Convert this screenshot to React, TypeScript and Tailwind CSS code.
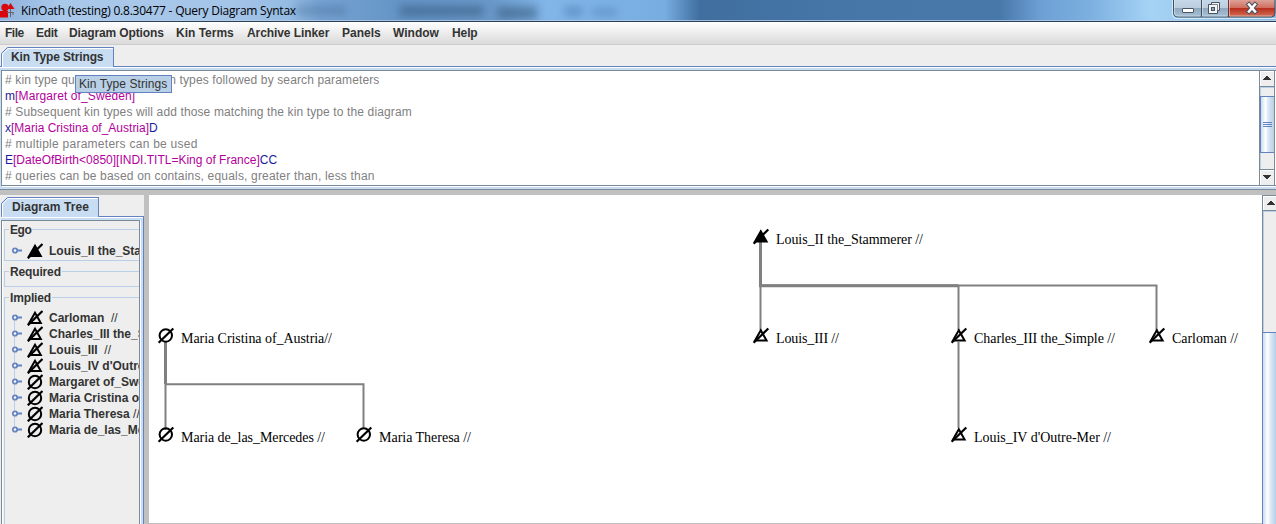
import React from "react";

type Kind = "circle" | "triangle" | "ego";

function Mark({ kind }: { kind: Kind }) {
  return (
    <g fill="none" stroke="#000" strokeWidth="2">
      {kind === "circle" ? (
        <circle cx="8" cy="8" r="6.2" />
      ) : (
        <path d="M8 2.8 L13.8 13 H2.2 Z" fill={kind === "ego" ? "#000" : "none"} />
      )}
      <path d="M.8 15.300 L15.500 1" strokeWidth="2.200" />
    </g>
  );
}

function Arrow({ down = false }: { down?: boolean }) {
  return (
    <svg width="9" height="5" className="block" shapeRendering="crispEdges">
      <path d={down ? "M0 0h8v1h-1v1h-1v1h-1v1h-2v-1h-1v-1h-1v-1h-1z" : "M0 4h8v-1h-1v-1h-1v-1h-1v-1h-2v1h-1v1h-1v1h-1z"} fill="#333" />
    </svg>
  );
}

const menus = [
  { label: "File", cls: "w-[31px] tracking-[-0.5px]" },
  { label: "Edit", cls: "w-[33px] tracking-[-0.3px]" },
  { label: "Diagram Options", cls: "w-[107px] tracking-[-0.13px]" },
  { label: "Kin Terms", cls: "w-[71px]" },
  { label: "Archive Linker", cls: "w-[95px] tracking-[-0.08px]" },
  { label: "Panels", cls: "w-[51px]" },
  { label: "Window", cls: "w-[59px]" },
  { label: "Help", cls: "w-[40px] tracking-[-0.1px]" },
];

function TitleBar() {
  return (
    <div className="relative flex h-[22px] shrink-0 justify-between overflow-hidden border-b border-[#2c4059] bg-[linear-gradient(90deg,#8fb2dc_0px,#a9c8ea_60px,#a5c5e8_230px,#94bbe2_290px,#76a3d3_320px,#6494c6_400px,#6a99c9_490px,#82b6e8_545px,#78ade1_665px,#3f6e9f_700px,#4776a9_860px,#4878aa_1000px,#6d9fd4_1040px,#7cb0e0_1090px,#a5d3f5_1150px,#8dbbe0_1276px)]">
      <div className="absolute left-[296px] top-[6px] h-[9px] w-[50px] bg-[#2f5079]/30 blur-[4px]" />
      <div className="absolute left-[400px] top-[6px] h-[10px] w-[84px] bg-[#1d3a5c]/40 blur-[4px]" />
      <div className="absolute left-[497px] top-[7px] h-[12px] w-[40px] bg-[#1d3a5c]/45 blur-[5px]" />
      <div className="absolute left-[565px] top-[7px] h-[9px] w-[17px] bg-[#2f5f95]/40 blur-[4px]" />
      <div className="absolute left-[592px] top-[8px] h-[8px] w-[25px] bg-[#2f5f95]/30 blur-[4px]" />
      <div className="absolute bottom-0 left-0 h-px w-full bg-[#b4cde6]/80" />
      <div className="relative flex items-start">
        <svg width="21" height="20" className="block">
          <circle cx="5" cy="7.500" r="3.700" fill="#d9060e" />
          <path d="M10.500 3l4 6H6.500z" fill="#d9060e" />
          <rect x="0" y="11" width="8" height="6.500" fill="#d9060e" />
          <path d="M10.500 9v8M7 12.500h6.500M13 12v3" stroke="#666" fill="none" />
        </svg>
        <span className="whitespace-nowrap font-['Open_Sans','Noto_Sans',sans-serif] text-[12px] leading-[22px] tracking-[-0.23px] text-black">KinOath (testing) 0.8.30477 - Query Diagram Syntax</span>
      </div>
      <svg width="104" height="21" className="relative block">
        <defs>
          <linearGradient id="glass" x1="0" y1="0" x2="0" y2="1"><stop offset="0" stopColor="#c5d8e9" /><stop offset=".48" stopColor="#bbcddd" /><stop offset=".5" stopColor="#91a9bf" /><stop offset="1" stopColor="#a7c2d8" /></linearGradient>
          <linearGradient id="close" x1="0" y1="0" x2="0" y2="1"><stop offset="0" stopColor="#dda298" /><stop offset=".48" stopColor="#cf6a5b" /><stop offset=".5" stopColor="#b82f1c" /><stop offset="1" stopColor="#d4735a" /></linearGradient>
        </defs>
        <path d="M.5 0v14q0 4.500 4.500 4.500H104" stroke="#d5e8f7" fill="none" />
        <path d="M2 0v13q0 4 4 4H29V0z" fill="url(#glass)" />
        <rect x="29" y="0" width="27" height="17" fill="url(#glass)" />
        <path d="M56 0h47v14q0 3-3 3H56z" fill="url(#close)" />
        <path d="M1.500 0v13q0 4.500 4.500 4.500H99q4 0 4-4V0M29.500 0v17" fill="none" stroke="#40505f" transform="translate(0 -.5)" />
        <path d="M56.500 0v17" stroke="#7a2f2a" />
        <path d="M2.500 0v13q0 3 3.500 3H28M30.500 0v16H55M57.500 0v16H100" fill="none" stroke="#e8f0f6" strokeOpacity=".5" />
        <rect x="10.500" y="8.500" width="11" height="4" rx=".5" fill="#fff" stroke="#4a5361" />
        <path d="M39.500 2.500h8v8h-2v3h-9v-9h3z" fill="#f5f5f5" stroke="#4a5361" />
        <path d="M39 4.500h6.500V11" fill="none" stroke="#4a5361" strokeOpacity=".7" />
        <rect x="39.500" y="7.500" width="3" height="3" fill="#8ea5bb" stroke="#4a5361" />
        <path d="M77 4.500l6 7M83 4.500l-6 7" stroke="#4a5361" strokeWidth="4.600" strokeLinecap="square" />
        <path d="M77 4.500l6 7M83 4.500l-6 7" stroke="#fff" strokeWidth="2.600" strokeLinecap="square" />
      </svg>
    </div>
  );
}

function Thumb() {
  return (
    <div className="flex h-[57px] items-center justify-center border-y border-l border-[#6382bf] bg-[linear-gradient(90deg,#c8ddf2,#fff_35%,#dbe8f5_55%,#b8cfe5)]">
      <div className="flex flex-col gap-px">
        {[0, 1, 2].map((i) => <div key={i} className="h-px w-[9px] bg-[#6382bf]" />)}
      </div>
    </div>
  );
}

function Editor() {
  const q = "text-[#b4009b]";
  return (
    <div className="relative h-[122px] shrink-0 border-b border-[#7a8a99] bg-[#c8ddf2] pl-px pt-px">
      <div className="h-px w-full bg-[#c8ddf2]" />
      <div className="flex h-[116px] border border-r-0 border-[#7a8a99] bg-white">
        <div className="flex flex-1 flex-col overflow-hidden whitespace-pre pl-[3px] pt-px text-[12px] leading-[16px] text-[#1a1a9c]">
          <div className="tracking-[0.13px] text-[#808080]"># kin type queries consist of kin types followed by search parameters</div>
          <div className="tracking-[0.1px]">m<span className={q}>[Margaret of_Sweden]</span></div>
          <div className="tracking-[0.125px] text-[#808080]"># Subsequent kin types will add those matching the kin type to the diagram</div>
          <div>x<span className={q}>[Maria Cristina of_Austria]</span>D</div>
          <div className="tracking-[0.26px] text-[#808080]"># multiple parameters can be used</div>
          <div>E<span className={q}>[DateOfBirth&lt;0850][INDI.TITL=King of France]</span>CC</div>
          <div className="tracking-[0.18px] text-[#808080]"># queries can be based on contains, equals, greater than, less than</div>
        </div>
        <div className="flex w-[15px] flex-col border-l border-[#7a8a99] bg-[#eee]">
          <div className="flex h-[16px] items-center justify-center border-b border-[#7a8a99] shadow-[inset_1px_1px_#fff]"><Arrow /></div>
          <div className="h-[9px] border-l border-t border-[#b8cfe5]" />
          <Thumb />
          <div className="flex-1 border-l border-[#b8cfe5]" />
          <div className="flex h-[16px] items-center justify-center border-t border-[#7a8a99] shadow-[inset_1px_1px_#fff]"><Arrow down /></div>
        </div>
        <div className="w-px bg-[#7a8a99]" />
        <div className="w-px bg-white" />
      </div>
      <div className="ml-px h-px bg-white" />
      <div className="absolute left-[75px] top-[7px] h-[18px] w-[97px] whitespace-nowrap border border-[#6382bf] bg-[#b8cfe5] pl-[3px] text-[12px] leading-[17px] tracking-[0.07px] text-[#333]">Kin Type Strings</div>
    </div>
  );
}

function Tab({ label, cls }: { label: string; cls: string }) {
  return (
    <div className={`relative -mb-px h-[20px] whitespace-nowrap text-[12px] font-bold leading-[20px] text-[#333] ${cls}`}>
      <svg width="100%" height="20" className="absolute left-0 top-0 -z-10">
        <path d="M0 20V6L6 0H200V20z" fill="#c8ddf2" />
        <path d="M.5 20V6.500L6.500 .5H200" fill="none" stroke="#6382bf" />
        <path d="M1.500 20V7L7 1.500H200" fill="none" stroke="#fff" />
      </svg>
      <div className="absolute right-0 top-0 h-[20px] w-px bg-[#6382bf]" />
      {label}
    </div>
  );
}

function TreeRow({ kind, name, suffix = "" }: { kind: Kind; name: string; suffix?: string }) {
  return (
    <div className="flex h-[16px] items-center">
      <svg width="12" height="16" className="block shrink-0">
        <circle cx="3" cy="7.500" r="2.200" fill="#fff" stroke="#6382bf" strokeWidth="1.800" />
        <path d="M5 7.500H10" stroke="#6382bf" strokeWidth="2" />
      </svg>
      <svg width="16" height="16" className="ml-[3px] block shrink-0"><Mark kind={kind} /></svg>
      <span className="ml-[6px] whitespace-pre text-[12px] font-bold leading-[16px] text-[#333]">{name}<span className="font-normal">{suffix}</span></span>
    </div>
  );
}

function GroupTitle({ label, cls }: { label: string; cls: string }) {
  return (
    <div className="flex h-[15px] items-center text-[12px] font-bold text-[#333]">
      <div className="h-px w-[5px] bg-[#b8cfe5]" />
      <span className={`whitespace-nowrap pl-px pt-px leading-[15px] ${cls}`}>{label}</span>
      <div className="h-px flex-1 bg-[#b8cfe5]" />
    </div>
  );
}

const implied: { kind: Kind; name: string; suffix?: string }[] = [
  { kind: "triangle", name: "Carloman  ", suffix: "//" },
  { kind: "triangle", name: "Charles_III the_Simple" },
  { kind: "triangle", name: "Louis_III  ", suffix: "//" },
  { kind: "triangle", name: "Louis_IV d'Outre-Mer" },
  { kind: "circle", name: "Margaret of_Sweden" },
  { kind: "circle", name: "Maria Cristina of_Austria" },
  { kind: "circle", name: "Maria Theresa ", suffix: "//" },
  { kind: "circle", name: "Maria de_las_Mercedes" },
];

function TreePanel() {
  return (
    <div className="flex w-[144px] flex-col bg-[#eee] pt-[2px]">
      <div className="isolate flex pl-px"><Tab label="Diagram Tree" cls="z-10 w-[98px] pl-[11px] tracking-[0.08px]" /></div>
      <div className="ml-px flex flex-1 flex-col border-r border-t border-[#6382bf] bg-[#c8ddf2]">
        <div className="h-px bg-white" />
        <div className="h-[2px]" />
        <div className="mr-[3px] flex flex-1 border-x border-t border-[#7a8a99] bg-white pl-px shadow-[1px_0_#fff]">
          <div className="flex w-[136px] flex-1 flex-col overflow-hidden bg-[#eee] pl-px pt-px">
            <div className="relative h-[39px]">
              <div className="absolute bottom-0 left-0 h-[32px] w-full border-b border-l border-[#b8cfe5]" />
              <GroupTitle label="Ego" cls="w-[23px] tracking-[-0.4px]" />
              <div className="mt-[6px] pl-[8px]"><TreeRow kind="ego" name="Louis_II the_Stammerer" /></div>
            </div>
            <div className="relative mt-[3px] h-[23px]">
              <div className="absolute bottom-0 left-0 h-[16px] w-full border-b border-l border-[#b8cfe5]" />
              <GroupTitle label="Required" cls="w-[53px] tracking-[-0.15px]" />
            </div>
            <div className="relative mt-[3px] flex-1">
              <div className="absolute bottom-0 left-0 top-[7px] w-px bg-[#b8cfe5]" />
              <div className="absolute left-[10px] top-[31px] h-[109px] w-px bg-[#b8cfe5]" />
              <GroupTitle label="Implied" cls="w-[43px] tracking-[-0.15px]" />
              <div className="relative mt-[5px] flex flex-col pl-[8px]">
                {implied.map((r) => <TreeRow key={r.name} {...r} />)}
              </div>
            </div>
          </div>
        </div>
      </div>
    </div>
  );
}

const people: { x: number; y: number; kind: Kind; name: string; w: number }[] = [
  { x: 760.5, y: 236.5, kind: "ego", name: "Louis_II the_Stammerer //", w: 147 },
  { x: 760.5, y: 335.5, kind: "triangle", name: "Louis_III //", w: 63 },
  { x: 958.5, y: 335.5, kind: "triangle", name: "Charles_III the_Simple //", w: 141 },
  { x: 1156.5, y: 335.5, kind: "triangle", name: "Carloman //", w: 66 },
  { x: 958.5, y: 434.5, kind: "triangle", name: "Louis_IV d'Outre-Mer //", w: 137 },
  { x: 165.5, y: 335.5, kind: "circle", name: "Maria Cristina of_Austria//", w: 151 },
  { x: 165.5, y: 434.5, kind: "circle", name: "Maria de_las_Mercedes //", w: 144 },
  { x: 363.5, y: 434.5, kind: "circle", name: "Maria Theresa //", w: 92 },
];

function Diagram() {
  return (
    <svg width="1113" height="328" viewBox="149 195 1113 328" className="block bg-white">
      <g fill="none" stroke="#808080" strokeWidth="2">
        <path d="M760.500 242V285.500H1156.500V330M760.500 285V330M958.500 285V330M958.500 342V428" />
        <path d="M760.500 242V285.700H958.500" strokeWidth="3" />
        <path d="M165.500 342V430M165.500 384.300H363.500V428" />
        <path d="M165.500 342V384" strokeWidth="3" />
      </g>
      {people.map((p) => (
        <g key={p.name}>
          <g transform={`translate(${p.x - 7.7} ${p.y - 8})`}><Mark kind={p.kind} /></g>
          <text x={p.x + 15.5} y={p.y + 7.5} textLength={p.w} fontSize="14" fontFamily="Liberation Serif, serif" fill="#000">{p.name}</text>
        </g>
      ))}
    </svg>
  );
}

export default function App() {
  return (
    <div className="flex h-[524px] w-[1276px] flex-col overflow-hidden bg-[#eee] font-['Liberation_Sans',sans-serif]">
      <TitleBar />
      <div className="flex h-[23px] shrink-0 border-b border-[#ccc] bg-linear-to-b from-white to-[#dadada] pl-[5px] text-[12px] font-bold leading-[22px] text-[#333]">
        {menus.map((m) => <div key={m.label} className={`whitespace-nowrap ${m.cls}`}>{m.label}</div>)}
      </div>
      <div className="flex h-[22px] shrink-0 items-end border-b border-[#6382bf] pl-px"><div className="isolate"><Tab label="Kin Type Strings" cls="w-[113px] pl-[10px] tracking-[-0.13px]" /></div></div>
      <div className="h-px shrink-0 bg-white" />
      <Editor />
      <div className="h-[5px] shrink-0 bg-[#c0c0c0]" />
      <div className="flex h-[329px] shrink-0">
        <TreePanel />
        <div className="w-[5px] bg-[#c0c0c0]" />
        <div className="border-b border-[#c0c0c0]"><Diagram /></div>
        <div className="flex flex-1 flex-col border-l border-t border-[#7a8a99] bg-[#eee]">
          <div className="flex h-[15px] items-center border-b border-[#7a8a99] pl-[4px] shadow-[inset_1px_1px_#fff]"><Arrow /></div>
          <div className="h-[121px] border-l border-t border-[#b8cfe5]" />
          <div className="-ml-px flex-1 border-l border-t border-[#6382bf] bg-[linear-gradient(90deg,#c8ddf2,#fff_35%,#dbe8f5_60%,#b8cfe5)]" />
        </div>
      </div>
    </div>
  );
}
